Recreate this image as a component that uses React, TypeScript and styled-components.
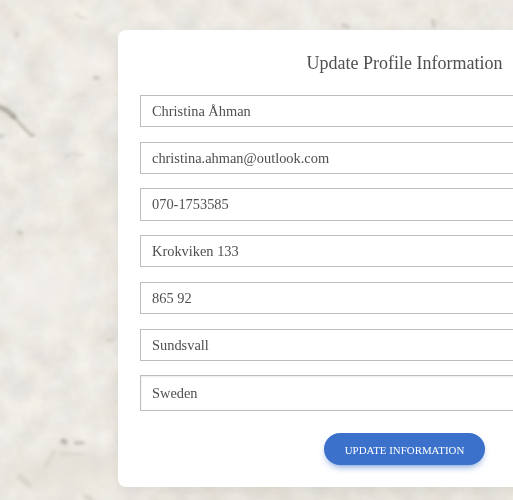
import React from 'react';
import styled, { createGlobalStyle } from 'styled-components';

const GlobalStyle = createGlobalStyle`
  *, *::before, *::after { box-sizing: border-box; }
  html, body { margin: 0; height: 500px; overflow: hidden; }
  body { background: #ebe8e2; font-family: "Liberation Serif", "Times New Roman", serif; color: #4f4f4f; }
`;

const Page = styled.main`
  position: relative;
  height: 500px;
  padding: 30px 0 0 118px;
  overflow: hidden;
`;

const Backdrop = styled.svg`
  position: absolute;
  inset: 0;
`;

const Card = styled.form`
  position: relative;
  display: flex;
  flex-direction: column;
  width: 573px;
  height: 457px;
  padding: 22px 22px 0;
  border-radius: 8px;
  background: #fff;
  box-shadow: 0 2px 15px -3px rgba(0, 0, 0, 0.07), 0 10px 20px -2px rgba(0, 0, 0, 0.04);
`;

const Title = styled.h1`
  margin: 0 0 21.11px;
  font-size: 18px;
  font-weight: 400;
  line-height: 22px;
  text-align: center;
`;

const Fields = styled.div`
  display: flex;
  flex-direction: column;
  gap: 14.532px;
`;

const Field = styled.input<{ $tall?: boolean }>`
  display: block;
  width: 100%;
  height: ${({ $tall }) => ($tall ? '36px' : '32.157px')};
  margin: 0;
  padding: ${({ $tall }) => ($tall ? '0 11px' : '0.8px 11px 0')};
  border: 1px solid #bdbdbd;
  border-radius: 0;
  outline: none;
  background: #fff;
  color: #4f4f4f;
  font: 14.4px "Liberation Serif", "Times New Roman", serif;
  box-shadow: ${({ $tall }) => ($tall ? 'inset 0 1px 2px rgba(0, 0, 0, 0.075)' : 'none')};
`;

const SubmitButton = styled.button`
  align-self: center;
  width: 161px;
  height: 32px;
  margin-top: 21.8px;
  padding: 2px 0 0;
  border: 0;
  border-radius: 16px;
  background: #3b71ca;
  color: #fff;
  font: 500 10.9px/18px "Liberation Serif", "Times New Roman", serif;
  text-transform: uppercase;
  white-space: nowrap;
  box-shadow: 0 4px 9px -4px #3b71ca;
`;

const values = [
  'Christina Åhman',
  'christina.ahman@outlook.com',
  '070-1753585',
  'Krokviken 133',
  '865 92',
  'Sundsvall',
];

/* Mottled paper with a few darker fibres and flecks. */
function PaperTexture() {
  return (
    <Backdrop width="513" height="500" viewBox="0 0 513 500" aria-hidden="true">
      <defs>
        <filter id="paper" x="0" y="0" width="100%" height="100%" colorInterpolationFilters="sRGB">
          <feTurbulence type="fractalNoise" baseFrequency="0.04 0.04" numOctaves="4" seed="12" />
          <feColorMatrix
            values="0.03 0.09 0 0 0.866
                    0.01 0.1 0.01 0 0.853
                    0 0.1 0.04 0 0.819
                    0 0 0 0 1"
          />
        </filter>
        <filter id="soft" x="-50%" y="-50%" width="200%" height="200%">
          <feGaussianBlur stdDeviation="1.5" />
        </filter>
        <filter id="wash" x="-50%" y="-50%" width="200%" height="200%">
          <feGaussianBlur stdDeviation="12" />
        </filter>
      </defs>
      <rect width="513" height="500" filter="url(#paper)" />
      <g filter="url(#wash)">
        <ellipse cx="78" cy="65" rx="30" ry="25" fill="#f4f0eb" opacity=".6" />
        <ellipse cx="40" cy="290" rx="42" ry="35" fill="#f3f1ec" opacity=".7" />
        <ellipse cx="94" cy="210" rx="18" ry="30" fill="#e7e2d4" opacity=".5" />
        <ellipse cx="60" cy="475" rx="60" ry="18" fill="#e3ded3" opacity=".6" />
        <ellipse cx="330" cy="495" rx="220" ry="8" fill="#ddd8cd" opacity=".5" />
      </g>
      <g filter="url(#soft)" fill="none" stroke="#8d8b7e" strokeLinecap="round">
        <path d="M-1 107 Q8 110 14 117" strokeWidth="5" opacity=".6" />
        <path d="M13 116 Q22 126 31 135" strokeWidth="3" opacity=".45" />
        <path d="M32 135 h2" strokeWidth="3" opacity=".45" />
        <path d="M77 13 Q79 19 86 18" strokeWidth="2" opacity=".22" />
        <path d="M17 34 v1" strokeWidth="4" opacity=".22" />
        <path d="M95 78 h3" strokeWidth="4" opacity=".33" />
        <path d="M1 136 h1" strokeWidth="4" opacity=".35" />
        <path d="M66 157 q4 -5 9 -3 t9 0" strokeWidth="2" opacity=".17" />
        <path d="M68 101 q9 -7 17 -6" strokeWidth="2" opacity=".12" />
        <path d="M19 232 l2 1" strokeWidth="4" opacity=".3" />
        <path d="M107 340 q4 1 7 -1" strokeWidth="2" opacity=".28" />
        <path d="M63 441 l2 1" strokeWidth="5" opacity=".55" />
        <path d="M76 443 h7" strokeWidth="4" opacity=".35" />
        <path d="M61 454 h22" strokeWidth="2" opacity=".16" />
        <path d="M20 477 l9 8" strokeWidth="6" opacity=".16" />
        <path d="M46 465 l8 -13" strokeWidth="5" opacity=".12" />
        <path d="M343 25 l5 2" strokeWidth="4" opacity=".3" />
        <path d="M433 21 l1 5" strokeWidth="4" opacity=".28" />
        <path d="M85 496 l6 3" strokeWidth="4" opacity=".2" />
      </g>
    </Backdrop>
  );
}

export default function App() {
  return (
    <>
      <GlobalStyle />
      <Page>
        <PaperTexture />
        <Card>
          <Title>Update Profile Information</Title>
          <Fields>
            {values.map((value) => (
              <Field key={value} type="text" defaultValue={value} />
            ))}
            <Field $tall type="text" defaultValue="Sweden" />
          </Fields>
          <SubmitButton type="button">Update Information</SubmitButton>
        </Card>
      </Page>
    </>
  );
}
